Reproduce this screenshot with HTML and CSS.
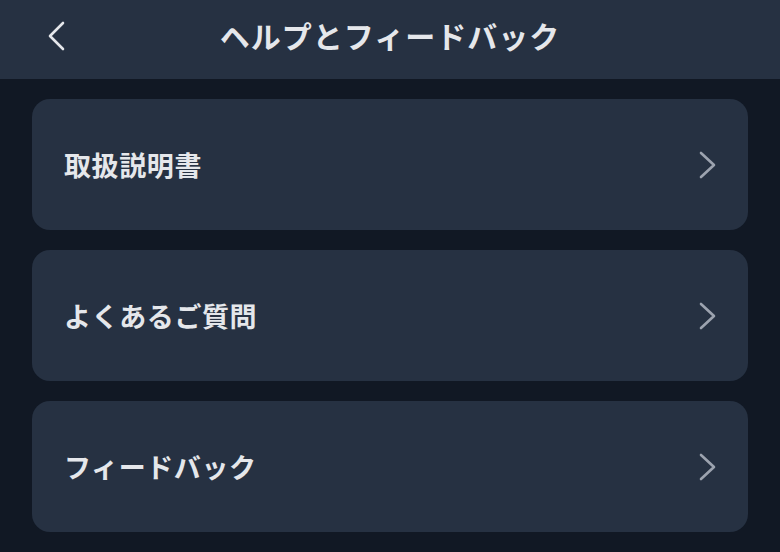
FILE: index.html
```html
<!DOCTYPE html>
<html lang="ja">
<head>
<meta charset="utf-8">
<link rel="stylesheet" href="styles.css">
</head>
<body>
<header class="topbar">
  <button class="back" aria-label="戻る">
    <svg width="20" height="30" viewBox="0 0 20 30"><path d="M17 2 L4 15 L17 28" fill="none" stroke="#e5e7eb" stroke-width="2.6" stroke-linecap="round" stroke-linejoin="round"/></svg>
  </button>
  <h1 class="title">ヘルプとフィードバック</h1>
</header>
<main class="list">
  <a class="item"><span class="label">取扱説明書</span><svg class="chev" width="18" height="28" viewBox="0 0 18 28"><path d="M2 2 L15 14 L2 26" fill="none" stroke="#9ca3af" stroke-width="2.6" stroke-linecap="round" stroke-linejoin="round"/></svg></a>
  <a class="item"><span class="label">よくあるご質問</span><svg class="chev" width="18" height="28" viewBox="0 0 18 28"><path d="M2 2 L15 14 L2 26" fill="none" stroke="#9ca3af" stroke-width="2.6" stroke-linecap="round" stroke-linejoin="round"/></svg></a>
  <a class="item"><span class="label">フィードバック</span><svg class="chev" width="18" height="28" viewBox="0 0 18 28"><path d="M2 2 L15 14 L2 26" fill="none" stroke="#9ca3af" stroke-width="2.6" stroke-linecap="round" stroke-linejoin="round"/></svg></a>
</main>
</body>
</html>
```
FILE: styles.css
```css
* { box-sizing: border-box; }
html, body {
  margin: 0;
  padding: 0;
  background: #111824;
  font-family: "Noto Sans CJK JP", "Noto Sans", sans-serif;
  color: #e5e7eb;
}
.topbar {
  height: 79px;
  background: #263142;
  display: flex;
  align-items: center;
  justify-content: center;
  position: relative;
}
.back {
  position: absolute;
  left: 46px;
  top: 21px;
  background: none;
  border: 0;
  padding: 0;
  width: 22px;
  height: 30px;
  display: flex;
}
.title {
  margin: 0;
  font-size: 30px;
  font-weight: 700;
  letter-spacing: 1px;
  line-height: 1;
  margin-top: -9px;
}
.list {
  display: flex;
  flex-direction: column;
  gap: 20px;
  padding: 20px 32px;
}
.item {
  height: 131px;
  background: #263142;
  border-radius: 18px;
  display: flex;
  align-items: center;
  justify-content: space-between;
  padding: 0 31px 0 32px;
}
.label {
  font-size: 27px;
  font-weight: 700;
  letter-spacing: 0.6px;
  color: #e5e7eb;
}
.chev { flex: none; }
```
